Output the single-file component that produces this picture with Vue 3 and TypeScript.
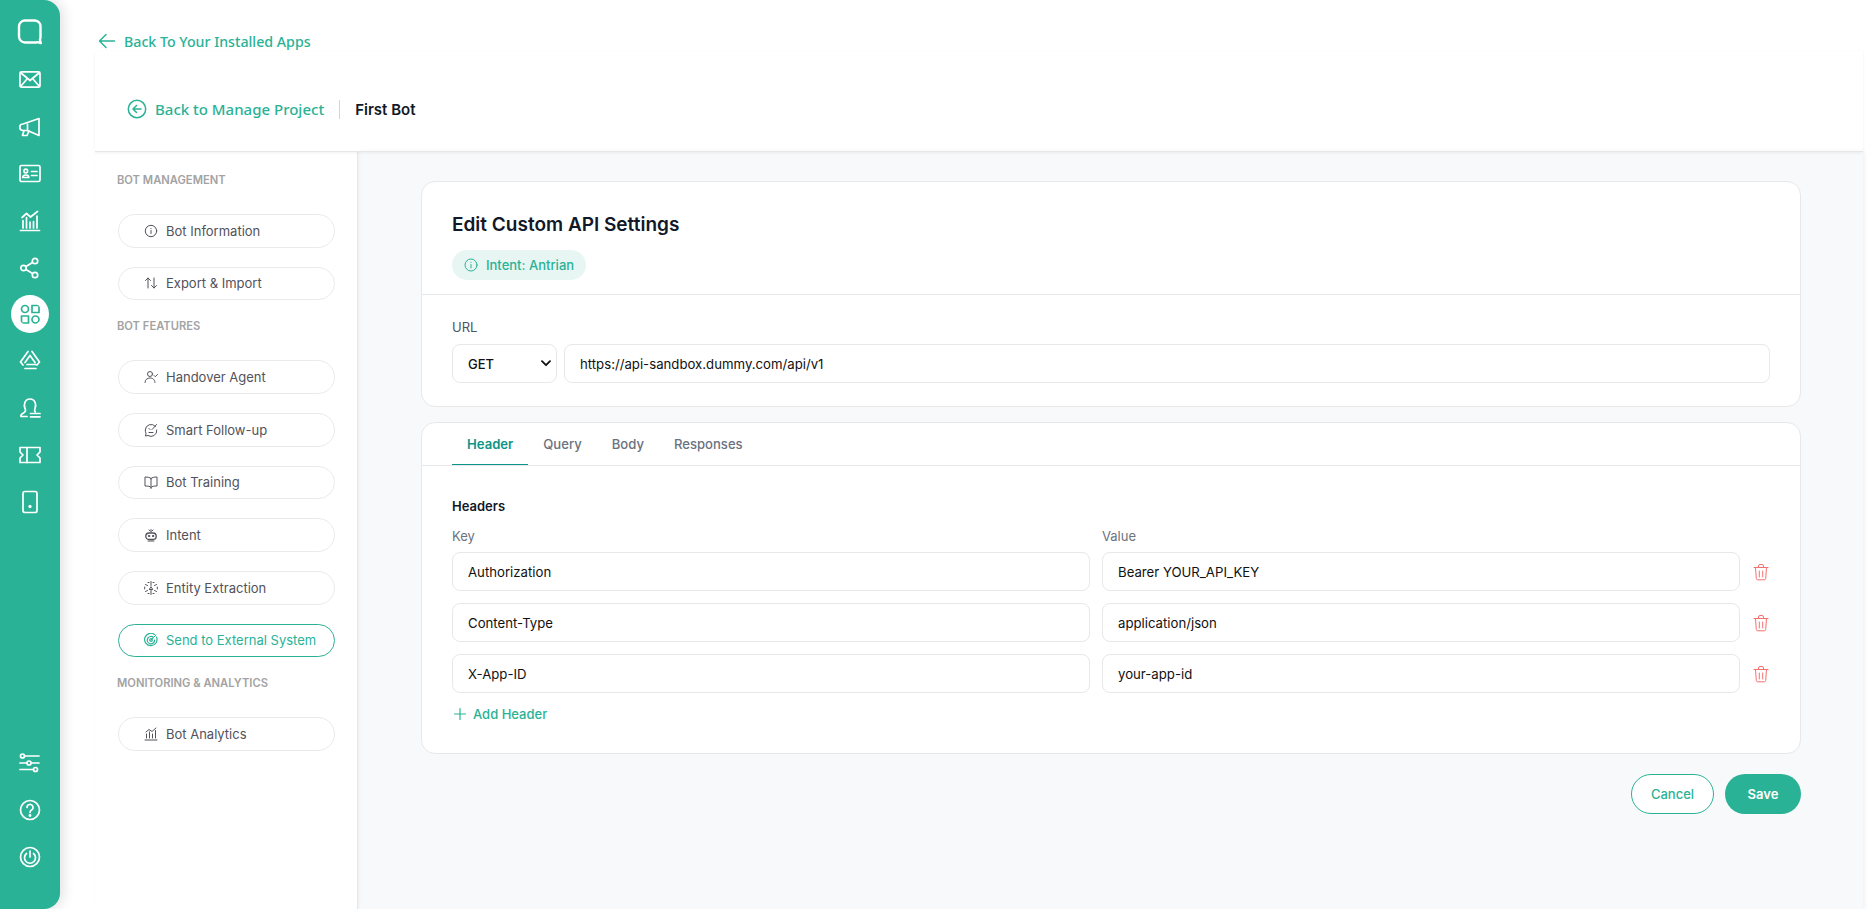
<script setup lang="ts">
interface NavItem { label: string; icon: string; active?: boolean }
interface Section { title: string; items: NavItem[] }

const sections: Section[] = [
  { title: 'BOT MANAGEMENT', items: [
    { label: 'Bot Information', icon: 'info' },
    { label: 'Export & Import', icon: 'swap' },
  ]},
  { title: 'BOT FEATURES', items: [
    { label: 'Handover Agent', icon: 'agent' },
    { label: 'Smart Follow-up', icon: 'follow' },
    { label: 'Bot Training', icon: 'book' },
    { label: 'Intent', icon: 'robot' },
    { label: 'Entity Extraction', icon: 'entity' },
    { label: 'Send to External System', icon: 'target', active: true },
  ]},
  { title: 'MONITORING & ANALYTICS', items: [
    { label: 'Bot Analytics', icon: 'chart' },
  ]},
]
const rows = [
  { key: 'Authorization', value: 'Bearer YOUR_API_KEY' },
  { key: 'Content-Type', value: 'application/json' },
  { key: 'X-App-ID', value: 'your-app-id' },
]
const tabs = ['Header', 'Query', 'Body', 'Responses']
const topIcons = ['mail', 'megaphone', 'card', 'bars', 'share', 'apps', 'triangle', 'stamp', 'ticket', 'phone']
const bottomIcons = ['sliders', 'help', 'power']
</script>

<template>
  <div class="page">
    <aside class="rail">
      <div class="rail-logo">
        <svg width="26" height="26" viewBox="0 0 26 26" fill="none" stroke="#fff" stroke-width="2.400" stroke-linejoin="round"><path d="M8 1.500h10A6 6 0 0 1 23.500 7.500V18c0 1-.2 2-.6 2.700l.9 3.300-3.300-.9c-.7.300-1.500.4-2.500.4H8A6 6 0 0 1 2 17.500v-10A6 6 0 0 1 8 1.500z" /></svg>
      </div>
      <div v-for="n in topIcons" :key="n" class="rail-item" :class="{ current: n === 'apps' }">
        <svg width="24" height="24" viewBox="0 0 24 24" fill="none" :stroke="n === 'apps' ? '#2ab296' : '#fff'" stroke-width="1.700" stroke-linecap="round" stroke-linejoin="round">
          <template v-if="n === 'mail'"><rect x="2" y="3.800" width="20" height="15.400" rx="1.500" /><path d="M3 5l9 7.500L21 5M3 18l6-7M21 18l-6-7" /></template>
          <template v-else-if="n === 'megaphone'"><path d="M21 3.500v17L9.500 15.500H5a3 3 0 0 1 0-6.500z" /><path d="M9.500 9v6.500M6 15.500L4.500 20.500h4.500l2-4.500" /></template>
          <template v-else-if="n === 'card'"><rect x="2" y="3.500" width="20" height="16" rx="1.500" /><circle cx="7.800" cy="9" r="1.800" /><path d="M4.800 15.500c0-2 1.500-2.500 3-2.500s3 .5 3 2.500zM13.500 9.500H19M13.500 13.500H19" /></template>
          <template v-else-if="n === 'bars'"><path d="M2.500 21.500h19M5 19v-7.500M8.500 19V8.500M12 19v-6M15.500 19v-6.500M19 19V7M4 8.500l4.500-4 4 3.500 7-5.500" /></template>
          <template v-else-if="n === 'share'"><circle cx="5.500" cy="12" r="2.700" /><circle cx="17" cy="5" r="2.700" /><circle cx="17" cy="19" r="2.700" /><path d="M8 10.500l6.500-4M8 13.500l6.500 4" /></template>
          <template v-else-if="n === 'apps'"><circle cx="7" cy="7" r="3.500" /><rect x="14" y="3.500" width="7" height="7" /><rect x="3.500" y="14" width="7" height="7" /><circle cx="17.500" cy="17.500" r="3.500" /></template>
          <template v-else-if="n === 'triangle'"><path d="M10 2.500L2.500 13l2.500 3M14 2.500L21.500 13 19 16M12 6.500L7 13.500M12 6.500l5 7M9 15.500h9M7 19.500h11" /></template>
          <template v-else-if="n === 'stamp'"><path d="M9 20.500H3c-.5-1.500.5-2.500 2.500-3.500 2-1 2.500-2.500 1.500-4.500C5.500 9 6.500 3 12 3s6.500 6 5 9.500c-.5 1.200-.8 2.500.3 3.500" /><path d="M12.500 17.500H22M12.500 20.800H22" /></template>
          <template v-else-if="n === 'ticket'"><path d="M2 4.500h20v4.500l-3 3 3 3v4.500H2V15l3-3-3-3z" /><path d="M9 4.500v15" /></template>
          <template v-else-if="n === 'phone'"><rect x="5" y="1.500" width="14" height="21" rx="2" /><circle cx="12" cy="16.500" r=".8" fill="#fff" /></template>
        </svg>
      </div>
      <div class="rail-spacer"></div>
      <div v-for="n in bottomIcons" :key="n" class="rail-item">
        <svg width="24" height="24" viewBox="0 0 24 24" fill="none" stroke="#fff" stroke-width="1.700" stroke-linecap="round">
          <template v-if="n === 'sliders'"><circle cx="4.500" cy="5" r="2" /><circle cx="11" cy="12" r="2" /><circle cx="17.500" cy="18.500" r="2" /><path d="M6.500 5H21M2 12h7M13 12h8M2 18.500h13.500" /></template>
          <template v-else-if="n === 'help'"><circle cx="12" cy="12" r="9.500" /><path d="M9 9.500A3 3 0 1 1 13.500 12c-1 .7-1.500 1.200-1.500 2.500" /><circle cx="12" cy="17.500" r=".6" fill="#fff" /></template>
          <template v-else-if="n === 'power'"><circle cx="12" cy="12" r="9.500" /><path d="M8.500 8.500a5.500 5.500 0 1 0 7 0M12 6v6" /></template>
        </svg>
      </div>
    </aside>

    <div class="shell">
      <a class="back-apps">
        <svg width="18" height="18" viewBox="0 0 18 18" fill="none" stroke="#2ab296" stroke-width="1.500" stroke-linecap="round" stroke-linejoin="round"><path d="M16.500 9h-15M8 2.500L1.500 9 8 15.500" /></svg>
        <span>Back To Your Installed Apps</span>
      </a>

      <header class="crumb">
        <svg width="20" height="20" viewBox="0 0 20 20" fill="none" stroke="#2ab296" stroke-width="1.500" stroke-linecap="round" stroke-linejoin="round"><circle cx="10" cy="10" r="8.700" /><path d="M14 10H6M9.500 6.500L6 10l3.500 3.500" /></svg>
        <span class="crumb-link">Back to Manage Project</span>
        <span class="crumb-sep"></span>
        <span class="crumb-title">First Bot</span>
      </header>

      <div class="body">
        <nav class="side">
          <template v-for="s in sections" :key="s.title">
            <div class="side-title">{{ s.title }}</div>
            <div class="side-list">
              <a v-for="it in s.items" :key="it.label" class="side-btn" :class="{ active: it.active }">
                <svg width="14" height="14" viewBox="0 0 14 14" fill="none" stroke="currentColor" stroke-width="1" stroke-linecap="round" stroke-linejoin="round">
                  <template v-if="it.icon === 'info'"><circle cx="7" cy="7" r="5.700" /><path d="M7 6.500v3M7 4.500v.2" /></template>
                  <template v-else-if="it.icon === 'swap'"><path d="M4 12V2M1.500 4.500L4 2l2.500 2.500M10 2v10M7.500 9.500L10 12l2.500-2.500" /></template>
                  <template v-else-if="it.icon === 'agent'"><circle cx="6" cy="4" r="2.500" /><path d="M1 12.500c0-3 2.500-4.500 5-4.500s4.500 1 5 4.500M10 5.500l1.200 1.200L13.500 4.500" /></template>
                  <template v-else-if="it.icon === 'follow'"><path d="M11.500 3.500A5.800 5.800 0 0 0 1.300 7c0 1.200.2 2.500.7 3.500l-.5 2.500 2.500-.5A5.800 5.800 0 0 0 12.800 7M5 5.500l1 1M9 5.500l-1 1M5 9.500h4M9.500 5l3-3.500" /></template>
                  <template v-else-if="it.icon === 'book'"><path d="M7 3.500C6 2.500 4 2 1 2v9c3 0 5 .3 6 1.500 1-1.200 3-1.500 6-1.500V2c-3 0-5 .5-6 1.500zM7 3.500v10" /></template>
                  <template v-else-if="it.icon === 'robot'"><rect x="1.800" y="5" width="10.400" height="6.500" rx="3.200" fill="none" stroke-width="1.300" /><circle cx="5" cy="8" r=".7" fill="currentColor" /><circle cx="9" cy="8" r=".7" fill="currentColor" /><path d="M5 2l1 1M9 2L8 3M7 1.500V4M4 13h6" /></template>
                  <template v-else-if="it.icon === 'entity'"><path d="M7 .5v4M7 9.500v4M1.500 3.500l2 1M12.500 3.500l-2 1M1.500 10.500l2-1M12.500 10.500l-2-1M7 6L5.500 8M7 6l1.500 2M5.500 8.500h3M.7 6v2M13.300 6v2M4 12.500h1M9 12.500h1M4 1.500h1M9 1.500h1" /></template>
                  <template v-else-if="it.icon === 'target'"><path d="M10.500 1.500A6.200 6.200 0 1 0 12.500 4" stroke-width="1.200" /><path d="M9.500 4.500A3.700 3.700 0 1 0 10.600 7" stroke-width="1.200" /><circle cx="7" cy="7" r="1.300" stroke-width="1.200" /><path d="M7 7l5-5" stroke-width="1" /></template>
                  <template v-else-if="it.icon === 'chart'"><path d="M1 13h12M2.500 11V7M5.500 11V5M8.500 11V7M11.500 11V3.500M2 5l3-2.500 3 2 4-3.500" /></template>
                </svg>
                <span>{{ it.label }}</span>
              </a>
            </div>
          </template>
        </nav>

        <main class="main">
          <section class="card">
            <div class="card-head">
              <h1>Edit Custom API Settings</h1>
              <div class="pill">
                <svg width="14" height="14" viewBox="0 0 14 14" fill="none" stroke="#2ab296" stroke-width="1" stroke-linecap="round"><circle cx="7" cy="7" r="6" /><path d="M7 6.500V10M7 4.200v.2" /></svg>
                <span>Intent: Antrian</span>
              </div>
            </div>
            <div class="card-url">
              <label>URL</label>
              <div class="url-row">
                <div class="select">
                  <span>GET</span>
                  <svg width="10" height="7" viewBox="0 0 10 7" fill="none" stroke="#111" stroke-width="1.800" stroke-linecap="round" stroke-linejoin="round"><path d="M1 1.200l4 4 4-4" /></svg>
                </div>
                <input class="field" value="https://api-sandbox.dummy.com/api/v1" />
              </div>
            </div>
          </section>

          <section class="card">
            <div class="tabs">
              <span v-for="(t, i) in tabs" :key="t" class="tab" :class="{ on: i === 0 }">{{ t }}</span>
            </div>
            <div class="panel">
              <h2>Headers</h2>
              <div class="grid">
                <span class="col-label">Key</span>
                <span class="col-label">Value</span>
                <span></span>
                <template v-for="r in rows" :key="r.key">
                  <input class="field" :value="r.key" />
                  <input class="field" :value="r.value" />
                  <svg class="trash" width="18" height="18" viewBox="0 0 18 18" fill="none" stroke="#f87171" stroke-width="1" stroke-linecap="round" stroke-linejoin="round"><path d="M2 4.500h14M6.500 4.500V3a1.500 1.500 0 0 1 1.500-1.500h2A1.500 1.500 0 0 1 11.500 3v1.500M3.500 4.500l.8 11a1.500 1.500 0 0 0 1.500 1.300h6.400a1.500 1.500 0 0 0 1.500-1.300l.8-11M7.300 8v6M10.700 8v6" /></svg>
                </template>
              </div>
              <a class="add">
                <svg width="14" height="14" viewBox="0 0 14 14" fill="none" stroke="#2ab296" stroke-width="1.200" stroke-linecap="round"><path d="M7 1.500v11M1.500 7h11" /></svg>
                <span>Add Header</span>
              </a>
            </div>
          </section>

          <div class="actions">
            <button class="btn ghost">Cancel</button>
            <button class="btn solid">Save</button>
          </div>
        </main>
      </div>
    </div>
  </div>
</template>

<style>
html, body { margin: 0; background: #fff; overflow: hidden; }
</style>

<style scoped>
.page { display: flex; width: 1873px; height: 909px; overflow: hidden; background: #fff; font-family: Inter, "Liberation Sans", sans-serif; }
.rail { width: 60px; height: 909px; flex: none; display: flex; flex-direction: column; align-items: center; background: #2ab296; border-radius: 0 16px 16px 0; box-shadow: 2px 0 14px rgba(0,0,0,.14); padding-top: 18px; box-sizing: border-box; padding-bottom: 29px; }
.rail-logo { height: 28px; display: flex; align-items: center; justify-content: center; margin-bottom: 11px; }
.rail-item { height: 46.800px; width: 60px; display: flex; align-items: center; justify-content: center; flex: none; }
.rail-item.current svg { background: #fff; border-radius: 50%; padding: 7px; box-sizing: content-box; width: 24px; height: 24px; }
.rail-spacer { flex: 1; }
.shell { flex: 1; min-width: 0; display: flex; flex-direction: column; padding-left: 35px; }
.back-apps { display: flex; align-items: center; gap: 8px; height: 20px; margin: 31px 0 0 3px; color: #2ab296; font: 500 14.200px "Noto Sans", sans-serif; }
.crumb { display: flex; align-items: center; height: 101px; margin-right: 10px; padding: 16px 0 0 32px; border-bottom: 1px solid #e5e7eb; box-shadow: 0 1px 3px rgba(0,0,0,.06); position: relative; box-sizing: border-box; z-index: 1; }
.crumb-link { margin-left: 8px; color: #2ab296; font: 500 15px "Noto Sans", sans-serif; }
.crumb-sep { width: 1px; height: 19px; margin: 0 15px; background: #d1d5db; }
.crumb-title { color: #111827; font-size: 15px; font-weight: 600; }
.body { flex: 1; display: flex; min-height: 0; }
.side { width: 263px; flex: none; box-sizing: border-box; padding: 21px 23px 0 23px; border-right: 1px solid #e5e7eb; box-shadow: 1px 0 3px rgba(0,0,0,.05); position: relative; background: #fff; }
.side-title { height: 14px; line-height: 14px; color: #a3a3a3; font-size: 11.200px; font-weight: 600; margin-bottom: 27px; margin-left: -1px; white-space: nowrap; }
.side-list { display: flex; flex-direction: column; gap: 19px; margin-bottom: 19px; }
.side-btn { height: 33.670px; box-sizing: border-box; width: 217px; display: flex; align-items: center; gap: 8px; padding-left: 25px; border: 1px solid #e9eaec; border-radius: 17px; color: #52525b; font-size: 13px; white-space: nowrap; }
.side-btn svg { flex: none; }
.side-btn.active { color: #2ab296; border-color: #2ab296; }
.main { flex: 1; min-width: 0; background: #f8f9fb; padding: 29px 62px 0 63px; margin-right: 10px; box-sizing: border-box; display: flex; flex-direction: column; box-shadow: 1px 0 5px rgba(0,0,0,.08); }
.card { background: #fff; border: 1px solid #e7e8ea; border-radius: 14px; margin-bottom: 15px; }
.card-head { padding: 32px 30px 0; height: 113px; box-sizing: border-box; border-bottom: 1px solid #e7e8ea; }
h1 { margin: 0; font-size: 19px; line-height: 22px; font-weight: 600; color: #111827; }
.pill { display: inline-flex; align-items: center; gap: 8px; height: 30px; margin-top: 14px; padding: 0 12px; border-radius: 15px; background: #e8f6f3; color: #2ab296; font-size: 13px; font-weight: 500; }
.card-url { padding: 24px 30px 23px; }
.card-url label { display: block; color: #4b5563; font-size: 13px; line-height: 16px; margin-bottom: 9px; }
.url-row { display: flex; gap: 7px; }
.select { width: 105px; flex: none; height: 39px; box-sizing: border-box; display: flex; align-items: center; justify-content: space-between; padding: 0 5px 0 15px; border: 1px solid #e7e8ea; border-radius: 8px; font-size: 13px; font-weight: 500; color: #111; }
.field { flex: 1; min-width: 0; height: 39px; box-sizing: border-box; padding: 0 15px; border: 1px solid #e7e8ea; border-radius: 8px; outline: none; background: #fff; color: #111; font: 400 13.200px Inter, sans-serif; }
.tabs { display: flex; height: 42px; padding-left: 30px; border-bottom: 1px solid #e7e8ea; }
.tab { display: flex; align-items: center; padding: 0 15px; box-sizing: border-box; color: #6b7280; font-size: 13.100px; font-weight: 500; height: 42px; }
.tab.on { color: #0d9488; font-weight: 600; border-bottom: 1px solid #0d9488; }
.panel { padding: 32px 30px 0; height: 287px; box-sizing: border-box; }
h2 { margin: 0; font-size: 13px; line-height: 16px; font-weight: 600; color: #111827; }
.grid { display: grid; grid-template-columns: 1fr 1fr 18px; column-gap: 12px; row-gap: 12px; align-items: center; margin-top: 14px; }
.col-label { color: #6b7280; font-size: 13px; line-height: 16px; margin-bottom: -4px; }
.grid .field { width: 100%; }
.trash { justify-self: center; }
.add { display: flex; align-items: center; gap: 6px; margin-top: 13px; padding-left: 1px; color: #2ab296; font: 500 13px Inter, sans-serif; }
.actions { display: flex; justify-content: flex-end; gap: 11px; margin-top: 5px; }
.btn { height: 40px; border-radius: 20px; font: 500 13px Inter, sans-serif; box-sizing: border-box; }
.ghost { width: 83px; background: #fff; color: #2ab296; border: 1px solid #2ab296; }
.solid { width: 76px; background: #2ab296; color: #fff; border: none; font-weight: 600; }
</style>
